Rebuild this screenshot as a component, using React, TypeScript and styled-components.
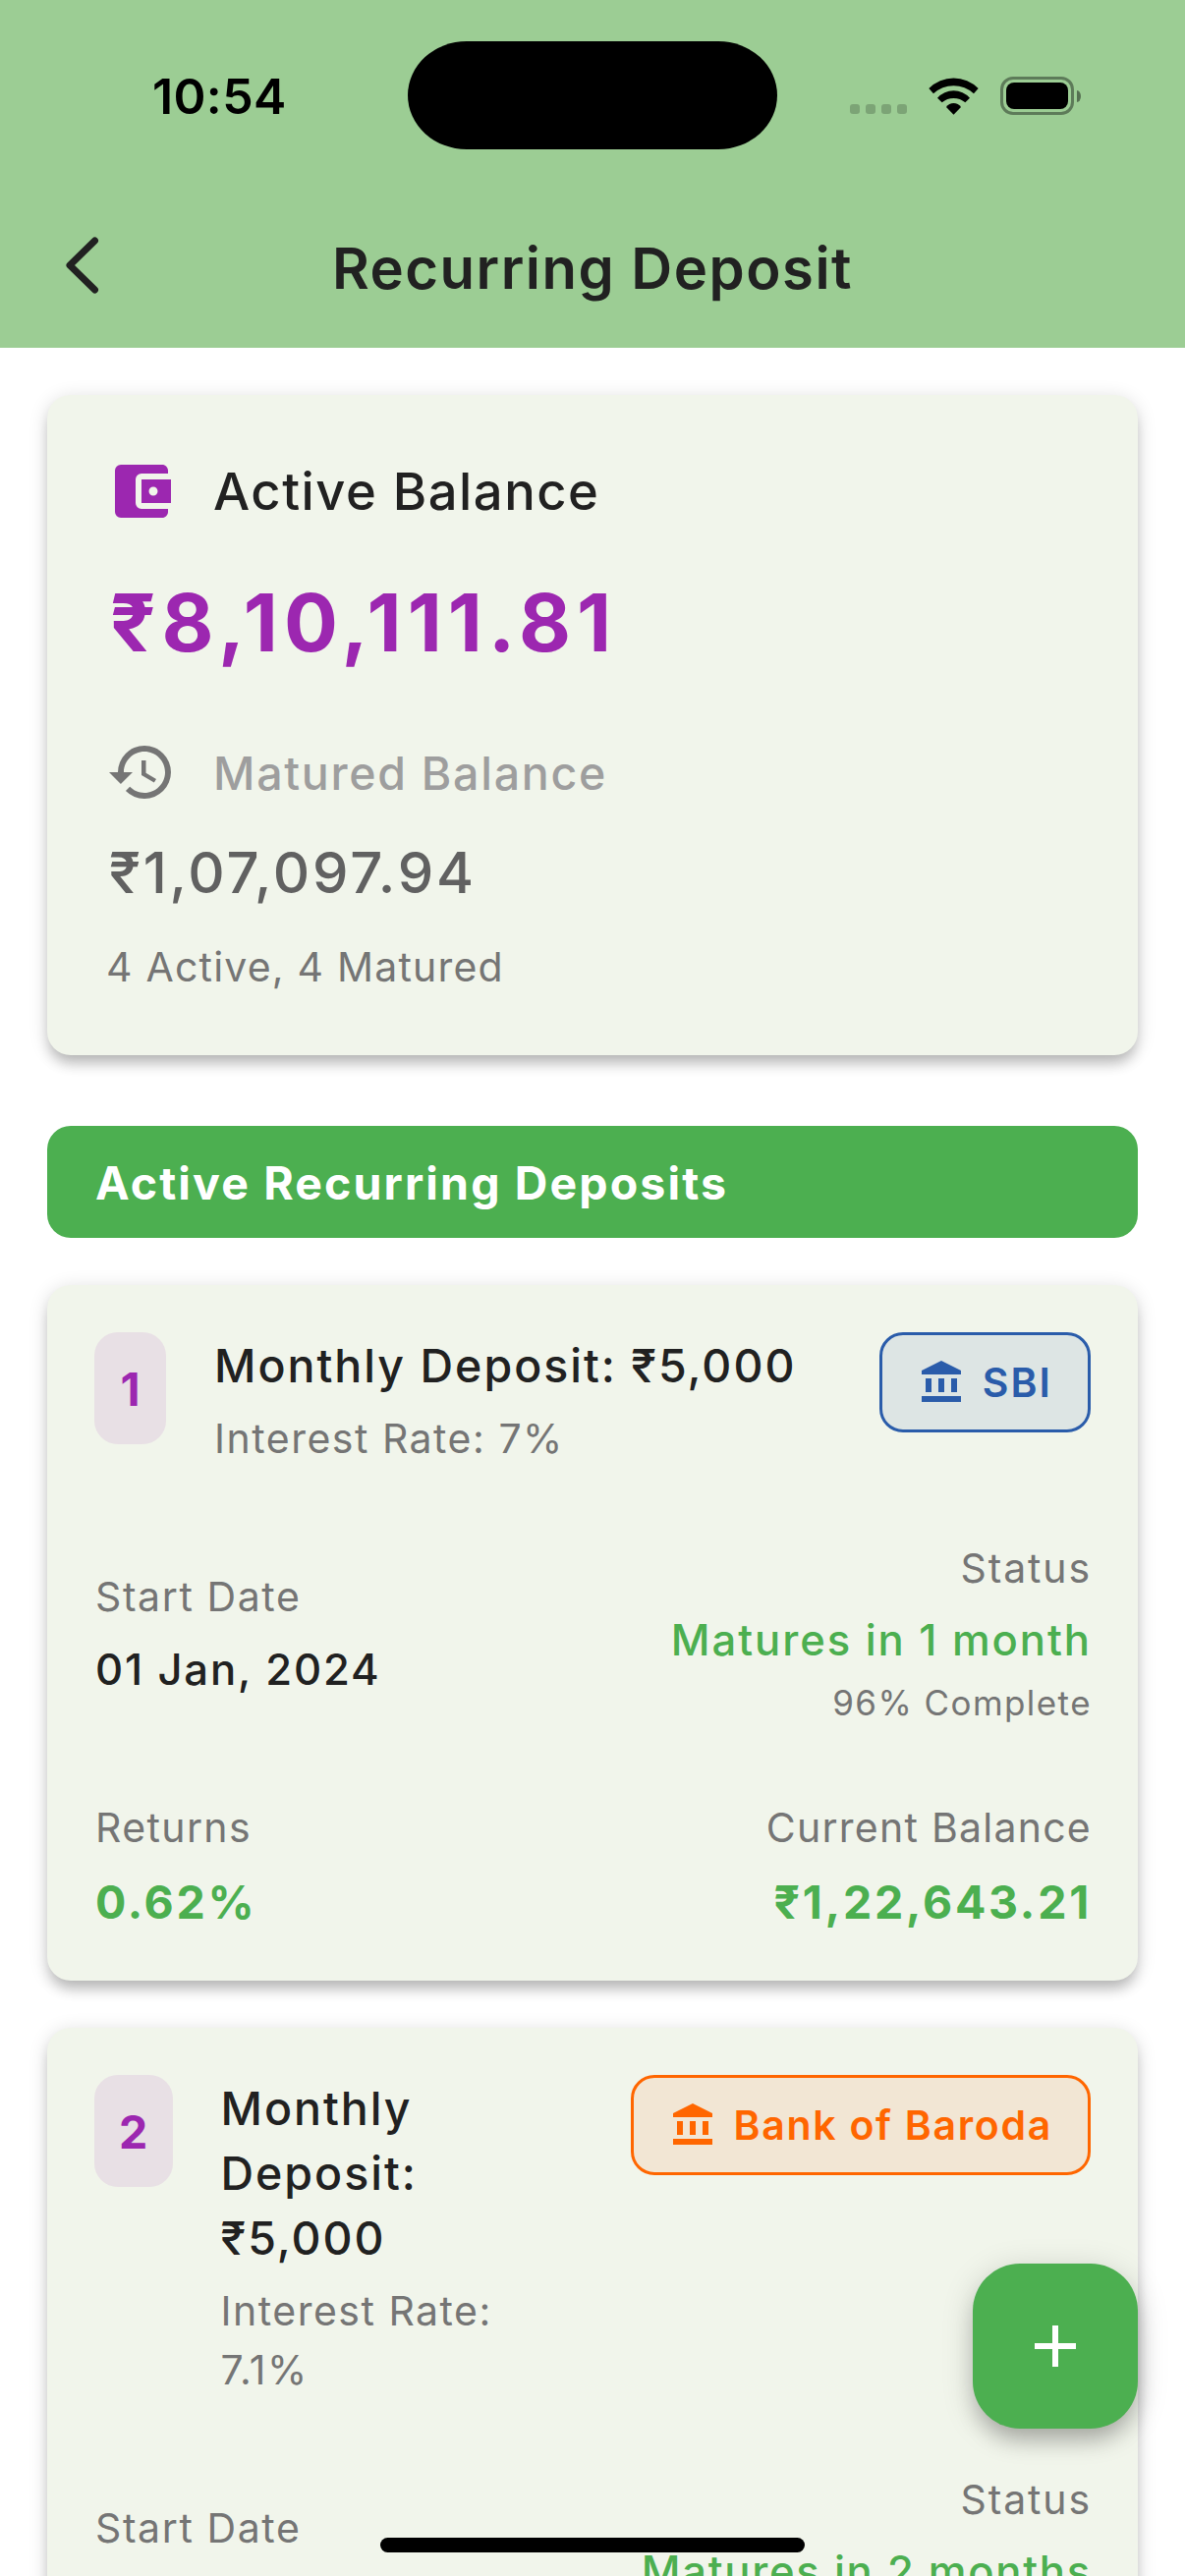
import React from "react";
import styled, { createGlobalStyle } from "styled-components";
import { MdAccountBalance, MdAccountBalanceWallet, MdAdd, MdHistory } from "react-icons/md";

const color = {
  header: "#9ccd94",
  card: "#f1f5eb",
  ink: "#212121",
  grey: "#757575",
  lightGrey: "#9e9e9e",
  darkGrey: "#616161",
  green: "#4caf50",
  purple: "#9c27b0",
};

const GlobalStyle = createGlobalStyle`
  *, *::before, *::after { box-sizing: border-box; }
  body {
    margin: 0;
    background: #ffffff;
    font-family: Inter, "Liberation Sans", sans-serif;
    -webkit-font-smoothing: antialiased;
  }
`;

const Screen = styled.div`
  position: relative;
  width: 1206px;
  height: 2622px;
  overflow: hidden;
  background: #ffffff;
`;

const Header = styled.header`
  height: 354px;
  background: ${color.header};
`;

const StatusBar = styled.div`
  display: grid;
  grid-template-columns: 415px 376px 1fr;
  align-items: center;
  height: 194px;
`;

const Clock = styled.div`
  padding: 2px 0 0 155px;
  font-size: 50px;
  font-weight: 600;
  line-height: 60px;
  letter-spacing: 0.37px;
  color: #000;
`;

const Island = styled.div`
  height: 110px;
  border-radius: 60px / 55px;
  background: #000;
`;

const Indicators = styled.div`
  display: flex;
  align-items: center;
  height: 39px;
  padding-left: 74px;
  margin-top: 1px;
`;

const SignalDots = styled.div`
  display: flex;
  gap: 6px;
  align-self: flex-end;
  margin: 0 22px 1px 0;
`;

const SignalDot = styled.span`
  width: 10px;
  height: 10px;
  border-radius: 3px;
  background: rgba(0, 0, 0, 0.2);
`;

const WifiIcon = styled.svg`
  width: 51px;
  height: 38px;
  margin-right: 22px;
`;

const Battery = styled.div`
  width: 75px;
  height: 39px;
  padding: 3px;
  border: 3px solid rgba(0, 0, 0, 0.4);
  border-radius: 13px;
`;

const BatteryLevel = styled.div`
  height: 100%;
  border-radius: 8px;
  background: #000;
`;

const BatteryCap = styled.span`
  width: 4px;
  height: 12px;
  margin-left: 3px;
  border-radius: 0 4px 4px 0 / 0 6px 6px 0;
  background: rgba(0, 0, 0, 0.45);
`;

const TitleBar = styled.div`
  display: grid;
  grid-template-columns: 1fr auto 1fr;
  align-items: center;
  height: 158px;
  padding: 0 60px;
`;

const BackButton = styled.button`
  display: flex;
  width: 48px;
  height: 64px;
  margin-top: -7px;
  padding: 0;
  border: 0;
  background: none;
  color: ${color.ink};
`;

const Title = styled.h1`
  margin: 0;
  font-size: 58px;
  font-weight: 600;
  line-height: 80px;
  letter-spacing: 1.5px;
  color: ${color.ink};
`;

const Content = styled.main`
  display: flex;
  flex-direction: column;
  padding: 48px 48px 0;
`;

const Card = styled.section`
  flex: none;
  border-radius: 24px;
  background: ${color.card};
  box-shadow: 0 11px 14px -3px rgba(0, 0, 0, 0.22), 0 3px 19px rgba(0, 0, 0, 0.14);
`;

const SummaryCard = styled(Card)`
  height: 672px;
  padding: 60px;
`;

const SummaryRow = styled.div<{ $height: number }>`
  display: flex;
  align-items: center;
  gap: 37px;
  height: ${(p) => p.$height}px;
`;

interface TypeProps {
  $size: number;
  $line: number;
  $weight?: number;
  $spacing?: number;
  $color?: string;
}

const Text = styled.div<TypeProps>`
  font-size: ${(p) => p.$size}px;
  line-height: ${(p) => p.$line}px;
  font-weight: ${(p) => p.$weight ?? 400};
  letter-spacing: ${(p) => p.$spacing ?? 0}px;
  color: ${(p) => p.$color ?? color.ink};
`;

const ActiveAmount = styled(Text)`
  margin-top: 37px;
  padding-left: 4px;
`;

const MaturedRow = styled(SummaryRow)`
  margin-top: 57px;
`;

const MaturedLabel = styled(Text)`
  padding-top: 2px;
`;

const MaturedAmount = styled(Text)`
  margin-top: 24px;
  padding-left: 3px;
`;

const Counts = styled(Text)`
  margin-top: 24px;
`;

const SectionBanner = styled.h2`
  margin: 72px 0 48px;
  padding: 0 49px;
  height: 114px;
  border-radius: 24px;
  background: ${color.green};
  color: #fff;
  font-size: 46.5px;
  font-weight: 700;
  line-height: 116px;
  letter-spacing: 2.11px;
`;

const DepositCard = styled(Card)`
  min-height: 708px;
  padding: 48px;
  margin-bottom: 48px;
`;

const CardHead = styled.div`
  display: flex;
  align-items: flex-start;
`;

const IndexBadge = styled.div<{ $width: number }>`
  flex: none;
  width: ${(p) => p.$width}px;
  height: 114px;
  margin-right: 48px;
  border-radius: 24px;
  background: rgba(156, 39, 176, 0.1);
  color: ${color.purple};
  font-size: 46.5px;
  font-weight: 700;
  line-height: 116px;
  text-align: center;
`;

const Description = styled.div`
  flex: 1;
  min-width: 0;
  display: flex;
  flex-direction: column;
  gap: 11px;
  padding: 1px 0 0 1px;
`;

const BankChip = styled.div<{ $tint: string; $fill: string; $spacing: number }>`
  flex: none;
  display: flex;
  align-items: center;
  gap: 18px;
  height: 102px;
  margin-left: 60px;
  padding: 0 36px;
  border: 3px solid ${(p) => p.$tint};
  border-radius: 24px;
  background: ${(p) => p.$fill};
  color: ${(p) => p.$tint};
  font-size: 41px;
  font-weight: 600;
  line-height: 60px;
  letter-spacing: ${(p) => p.$spacing}px;
`;

const FieldRow = styled.div<{ $gap: number; $height: number }>`
  display: flex;
  align-items: center;
  justify-content: space-between;
  height: ${(p) => p.$height}px;
  margin-top: ${(p) => p.$gap}px;
`;

const Field = styled.div<{ $height: number; $end?: boolean }>`
  display: flex;
  flex-direction: column;
  align-items: ${(p) => (p.$end ? "flex-end" : "flex-start")};
  gap: 12px;
  height: ${(p) => p.$height}px;
  margin-left: ${(p) => (p.$end ? 0 : 1)}px;
  margin-right: ${(p) => (p.$end ? -1 : 0)}px;
`;

const Progress = styled(Text)`
  margin-top: -7px;
`;

const AddButton = styled.button`
  position: absolute;
  right: 48px;
  top: 2304px;
  display: flex;
  align-items: center;
  justify-content: center;
  width: 168px;
  height: 168px;
  padding: 0;
  border: 0;
  border-radius: 48px;
  background: ${color.green};
  color: #fff;
  box-shadow: 0 16px 22px -5px rgba(0, 0, 0, 0.22), 0 6px 32px rgba(0, 0, 0, 0.17);
`;

const HomeIndicator = styled.div`
  position: absolute;
  left: 387px;
  top: 2583px;
  width: 432px;
  height: 15px;
  border-radius: 8px;
  background: #000;
`;

interface Deposit {
  index: number;
  badgeWidth: number;
  amount: string;
  rate: string;
  bank: string;
  tint: string;
  fill: string;
  chipSpacing: number;
  status: string;
  statusSpacing: number;
  startDate?: string;
  progress?: string;
  totals?: { returns: string; balance: string };
}

const deposits: Deposit[] = [
  {
    index: 1,
    badgeWidth: 73,
    amount: "₹5,000",
    rate: "7%",
    bank: "SBI",
    tint: "#2a5caa",
    fill: "#dde5e4",
    chipSpacing: 2.1,
    status: "Matures in 1 month",
    statusSpacing: 1.94,
    startDate: "01 Jan, 2024",
    progress: "96% Complete",
    totals: { returns: "0.62%", balance: "₹1,22,643.21" },
  },
  {
    index: 2,
    badgeWidth: 79.5,
    amount: "₹5,000",
    rate: "7.1%",
    bank: "Bank of Baroda",
    tint: "#ff6600",
    fill: "#f2e6d4",
    chipSpacing: 1.7,
    status: "Matures in 2 months",
    statusSpacing: 1.72,
  },
];

function DepositItem({ deposit: d }: { deposit: Deposit }) {
  return (
    <DepositCard>
      <CardHead>
        <IndexBadge $width={d.badgeWidth}>{d.index}</IndexBadge>
        <Description>
          <Text $size={46.5} $line={66} $weight={500} $spacing={2}>
            Monthly Deposit: {d.amount}
          </Text>
          <Text $size={41} $line={60} $spacing={1.5} $color={color.grey}>
            Interest Rate: {d.rate}
          </Text>
        </Description>
        <BankChip $tint={d.tint} $fill={d.fill} $spacing={d.chipSpacing}>
          <MdAccountBalance size={48} />
          {d.bank}
        </BankChip>
      </CardHead>

      <FieldRow $gap={72} $height={193}>
        <Field $height={136}>
          <Text $size={41} $line={60} $spacing={1.6} $color={color.grey}>
            Start Date
          </Text>
          {d.startDate && (
            <Text $size={43.6} $line={65} $weight={500} $spacing={1.86}>
              {d.startDate}
            </Text>
          )}
        </Field>
        <Field $height={193} $end>
          <Text $size={41} $line={60} $spacing={1.88} $color={color.grey}>
            Status
          </Text>
          <Text $size={43.6} $line={64} $weight={500} $spacing={d.statusSpacing} $color={color.green}>
            {d.status}
          </Text>
          {d.progress && (
            <Progress $size={35} $line={52} $spacing={1.43} $color={color.grey}>
              {d.progress}
            </Progress>
          )}
        </Field>
      </FieldRow>

      {d.totals && (
        <FieldRow $gap={71} $height={138}>
          <Field $height={138}>
            <Text $size={41} $line={60} $spacing={1.39} $color={color.grey}>
              Returns
            </Text>
            <Text $size={46.5} $line={68} $weight={700} $spacing={2.7} $color={color.green}>
              {d.totals.returns}
            </Text>
          </Field>
          <Field $height={138} $end>
            <Text $size={41} $line={60} $spacing={1.25} $color={color.grey}>
              Current Balance
            </Text>
            <Text $size={46.5} $line={68} $weight={700} $spacing={2.75} $color={color.green}>
              {d.totals.balance}
            </Text>
          </Field>
        </FieldRow>
      )}
    </DepositCard>
  );
}

export default function App() {
  return (
    <Screen>
      <GlobalStyle />
      <Header>
        <StatusBar>
          <Clock>10:54</Clock>
          <Island />
          <Indicators>
            <SignalDots>
              <SignalDot />
              <SignalDot />
              <SignalDot />
              <SignalDot />
            </SignalDots>
            <WifiIcon viewBox="285 55 153 114" aria-label="Wi-Fi">
              <path d="M286 88A106 106 0 0 1 437 88L423 104A90 90 0 0 0 300 104Z" />
              <path d="M312 117A66 66 0 0 1 411 117L397 131A55 55 0 0 0 326 131Z" />
              <path d="M339 145A27 27 0 0 1 384 145L361.500 168Z" />
            </WifiIcon>
            <Battery>
              <BatteryLevel />
            </Battery>
            <BatteryCap />
          </Indicators>
        </StatusBar>
        <TitleBar>
          <BackButton aria-label="Back">
            <svg width="48" height="64" viewBox="0 0 48 64" fill="none">
              <path
                d="M36.500 7L11 32L36.500 57"
                stroke="currentColor"
                strokeWidth="7"
                strokeLinecap="round"
                strokeLinejoin="round"
              />
            </svg>
          </BackButton>
          <Title>Recurring Deposit</Title>
        </TitleBar>
      </Header>

      <Content>
        <SummaryCard>
          <SummaryRow $height={76}>
            <MdAccountBalanceWallet size={72} color={color.purple} />
            <Text $size={52.5} $line={76} $weight={500} $spacing={1.51}>
              Active Balance
            </Text>
          </SummaryRow>
          <ActiveAmount $size={81.5} $line={118} $weight={700} $spacing={6.03} $color={color.purple}>
            ₹8,10,111.81
          </ActiveAmount>
          <MaturedRow $height={72}>
            <MdHistory size={72} color={color.grey} />
            <MaturedLabel $size={46.5} $line={72} $weight={500} $spacing={1.71} $color={color.lightGrey}>
              Matured Balance
            </MaturedLabel>
          </MaturedRow>
          <MaturedAmount $size={58} $line={84} $weight={500} $spacing={2.76} $color={color.darkGrey}>
            ₹1,07,097.94
          </MaturedAmount>
          <Counts $size={41} $line={60} $spacing={1.2} $color={color.grey}>
            4 Active, 4 Matured
          </Counts>
        </SummaryCard>

        <SectionBanner>Active Recurring Deposits</SectionBanner>

        {deposits.map((d) => (
          <DepositItem key={d.index} deposit={d} />
        ))}
      </Content>

      <AddButton aria-label="Add deposit">
        <MdAdd size={72} />
      </AddButton>
      <HomeIndicator />
    </Screen>
  );
}
